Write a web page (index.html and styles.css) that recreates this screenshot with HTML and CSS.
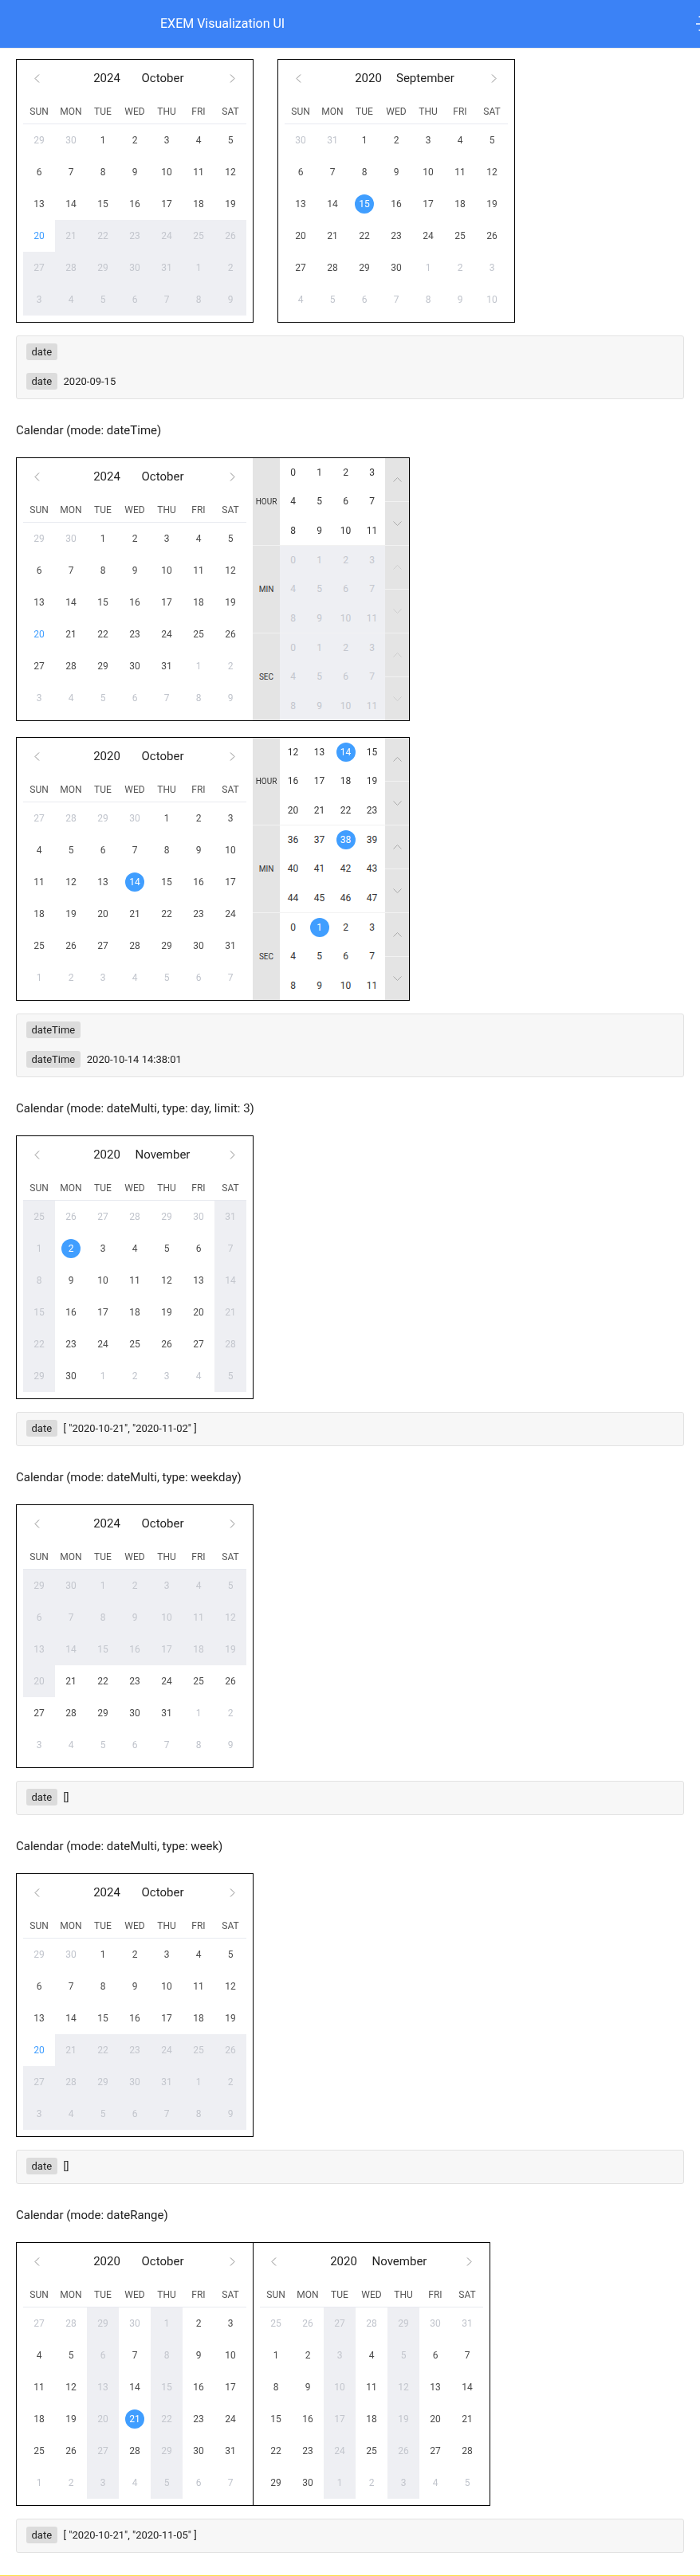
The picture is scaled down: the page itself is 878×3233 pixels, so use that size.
FILE: index.html
```html
<!DOCTYPE html>
<html lang="en">
<head>
<meta charset="utf-8">
<title>EXEM Visualization UI</title>
<link rel="stylesheet" href="styles.css">
</head>
<body>
<div class="app">
<header class="topbar">
  <span class="brand">EXEM Visualization UI</span>
  <svg class="menu" width="5" height="20" viewBox="0 0 5 20"><path d="M3.5 1H5M0 10h5M3.5 18H5" stroke="#fff" stroke-width="1.4"/></svg>
</header>

<main class="page">
  <div class="row">
    <div class="box">
      <div class="cal-body">
        <div class="cal-head"><span class="nav"><svg width="7" height="11" viewBox="0 0 7 11"><path d="M6 .5 1 5.5l5 5" fill="none" stroke="#8c8c8c"/></svg></span><div class="ym"><span>2024</span><span>October</span></div><span class="nav"><svg width="7" height="11" viewBox="0 0 7 11"><path d="M1 .5l5 5-5 5" fill="none" stroke="#8c8c8c"/></svg></span></div>
        <div class="week"><span>SUN</span><span>MON</span><span>TUE</span><span>WED</span><span>THU</span><span>FRI</span><span>SAT</span></div>
        <div class="days">
          <span class="o">29</span><span class="o">30</span><span>1</span><span>2</span><span>3</span><span>4</span><span>5</span>
          <span>6</span><span>7</span><span>8</span><span>9</span><span>10</span><span>11</span><span>12</span>
          <span>13</span><span>14</span><span>15</span><span>16</span><span>17</span><span>18</span><span>19</span>
          <span class="t">20</span><span class="x">21</span><span class="x">22</span><span class="x">23</span><span class="x">24</span><span class="x">25</span><span class="x">26</span>
          <span class="x">27</span><span class="x">28</span><span class="x">29</span><span class="x">30</span><span class="x">31</span><span class="x">1</span><span class="x">2</span>
          <span class="x">3</span><span class="x">4</span><span class="x">5</span><span class="x">6</span><span class="x">7</span><span class="x">8</span><span class="x">9</span>
        </div>
      </div>
    </div>
    <div class="box">
      <div class="cal-body">
        <div class="cal-head"><span class="nav"><svg width="7" height="11" viewBox="0 0 7 11"><path d="M6 .5 1 5.5l5 5" fill="none" stroke="#8c8c8c"/></svg></span><div class="ym"><span>2020</span><span>September</span></div><span class="nav"><svg width="7" height="11" viewBox="0 0 7 11"><path d="M1 .5l5 5-5 5" fill="none" stroke="#8c8c8c"/></svg></span></div>
        <div class="week"><span>SUN</span><span>MON</span><span>TUE</span><span>WED</span><span>THU</span><span>FRI</span><span>SAT</span></div>
        <div class="days">
          <span class="o">30</span><span class="o">31</span><span>1</span><span>2</span><span>3</span><span>4</span><span>5</span>
          <span>6</span><span>7</span><span>8</span><span>9</span><span>10</span><span>11</span><span>12</span>
          <span>13</span><span>14</span><span class="s"><i>15</i></span><span>16</span><span>17</span><span>18</span><span>19</span>
          <span>20</span><span>21</span><span>22</span><span>23</span><span>24</span><span>25</span><span>26</span>
          <span>27</span><span>28</span><span>29</span><span>30</span><span class="o">1</span><span class="o">2</span><span class="o">3</span>
          <span class="o">4</span><span class="o">5</span><span class="o">6</span><span class="o">7</span><span class="o">8</span><span class="o">9</span><span class="o">10</span>
        </div>
      </div>
    </div>
  </div>

  <div class="info">
    <div class="line"><span class="tag">date</span></div>
    <div class="line"><span class="tag">date</span><span>2020-09-15</span></div>
  </div>

  <h3 class="title">Calendar (mode: dateTime)</h3>

  <div class="box">
    <div class="cal-body">
      <div class="cal-head"><span class="nav"><svg width="7" height="11" viewBox="0 0 7 11"><path d="M6 .5 1 5.5l5 5" fill="none" stroke="#8c8c8c"/></svg></span><div class="ym"><span>2024</span><span>October</span></div><span class="nav"><svg width="7" height="11" viewBox="0 0 7 11"><path d="M1 .5l5 5-5 5" fill="none" stroke="#8c8c8c"/></svg></span></div>
      <div class="week"><span>SUN</span><span>MON</span><span>TUE</span><span>WED</span><span>THU</span><span>FRI</span><span>SAT</span></div>
      <div class="days">
        <span class="o">29</span><span class="o">30</span><span>1</span><span>2</span><span>3</span><span>4</span><span>5</span>
        <span>6</span><span>7</span><span>8</span><span>9</span><span>10</span><span>11</span><span>12</span>
        <span>13</span><span>14</span><span>15</span><span>16</span><span>17</span><span>18</span><span>19</span>
        <span class="t">20</span><span>21</span><span>22</span><span>23</span><span>24</span><span>25</span><span>26</span>
        <span>27</span><span>28</span><span>29</span><span>30</span><span>31</span><span class="o">1</span><span class="o">2</span>
        <span class="o">3</span><span class="o">4</span><span class="o">5</span><span class="o">6</span><span class="o">7</span><span class="o">8</span><span class="o">9</span>
      </div>
    </div>
    <div class="time">
      <div class="tsec">
        <span class="tlabel">HOUR</span>
        <div class="tnums"><span>0</span><span>1</span><span>2</span><span>3</span><span>4</span><span>5</span><span>6</span><span>7</span><span>8</span><span>9</span><span>10</span><span>11</span></div>
        <div class="tarrows"><span><svg width="11" height="6" viewBox="0 0 11 6"><path d="M.5 5.5l5-5 5 5" fill="none"/></svg></span><span><svg width="11" height="6" viewBox="0 0 11 6"><path d="M.5.5l5 5 5-5" fill="none"/></svg></span></div>
      </div>
      <div class="tsec off">
        <span class="tlabel">MIN</span>
        <div class="tnums"><span>0</span><span>1</span><span>2</span><span>3</span><span>4</span><span>5</span><span>6</span><span>7</span><span>8</span><span>9</span><span>10</span><span>11</span></div>
        <div class="tarrows"><span><svg width="11" height="6" viewBox="0 0 11 6"><path d="M.5 5.5l5-5 5 5" fill="none"/></svg></span><span><svg width="11" height="6" viewBox="0 0 11 6"><path d="M.5.5l5 5 5-5" fill="none"/></svg></span></div>
      </div>
      <div class="tsec off">
        <span class="tlabel">SEC</span>
        <div class="tnums"><span>0</span><span>1</span><span>2</span><span>3</span><span>4</span><span>5</span><span>6</span><span>7</span><span>8</span><span>9</span><span>10</span><span>11</span></div>
        <div class="tarrows"><span><svg width="11" height="6" viewBox="0 0 11 6"><path d="M.5 5.5l5-5 5 5" fill="none"/></svg></span><span><svg width="11" height="6" viewBox="0 0 11 6"><path d="M.5.5l5 5 5-5" fill="none"/></svg></span></div>
      </div>
    </div>
  </div>

  <div class="box gap20">
    <div class="cal-body">
      <div class="cal-head"><span class="nav"><svg width="7" height="11" viewBox="0 0 7 11"><path d="M6 .5 1 5.5l5 5" fill="none" stroke="#8c8c8c"/></svg></span><div class="ym"><span>2020</span><span>October</span></div><span class="nav"><svg width="7" height="11" viewBox="0 0 7 11"><path d="M1 .5l5 5-5 5" fill="none" stroke="#8c8c8c"/></svg></span></div>
      <div class="week"><span>SUN</span><span>MON</span><span>TUE</span><span>WED</span><span>THU</span><span>FRI</span><span>SAT</span></div>
      <div class="days">
        <span class="o">27</span><span class="o">28</span><span class="o">29</span><span class="o">30</span><span>1</span><span>2</span><span>3</span>
        <span>4</span><span>5</span><span>6</span><span>7</span><span>8</span><span>9</span><span>10</span>
        <span>11</span><span>12</span><span>13</span><span class="s"><i>14</i></span><span>15</span><span>16</span><span>17</span>
        <span>18</span><span>19</span><span>20</span><span>21</span><span>22</span><span>23</span><span>24</span>
        <span>25</span><span>26</span><span>27</span><span>28</span><span>29</span><span>30</span><span>31</span>
        <span class="o">1</span><span class="o">2</span><span class="o">3</span><span class="o">4</span><span class="o">5</span><span class="o">6</span><span class="o">7</span>
      </div>
    </div>
    <div class="time">
      <div class="tsec">
        <span class="tlabel">HOUR</span>
        <div class="tnums"><span>12</span><span>13</span><span class="s"><i>14</i></span><span>15</span><span>16</span><span>17</span><span>18</span><span>19</span><span>20</span><span>21</span><span>22</span><span>23</span></div>
        <div class="tarrows"><span><svg width="11" height="6" viewBox="0 0 11 6"><path d="M.5 5.5l5-5 5 5" fill="none"/></svg></span><span><svg width="11" height="6" viewBox="0 0 11 6"><path d="M.5.5l5 5 5-5" fill="none"/></svg></span></div>
      </div>
      <div class="tsec">
        <span class="tlabel">MIN</span>
        <div class="tnums"><span>36</span><span>37</span><span class="s"><i>38</i></span><span>39</span><span>40</span><span>41</span><span>42</span><span>43</span><span>44</span><span>45</span><span>46</span><span>47</span></div>
        <div class="tarrows"><span><svg width="11" height="6" viewBox="0 0 11 6"><path d="M.5 5.5l5-5 5 5" fill="none"/></svg></span><span><svg width="11" height="6" viewBox="0 0 11 6"><path d="M.5.5l5 5 5-5" fill="none"/></svg></span></div>
      </div>
      <div class="tsec">
        <span class="tlabel">SEC</span>
        <div class="tnums"><span>0</span><span class="s"><i>1</i></span><span>2</span><span>3</span><span>4</span><span>5</span><span>6</span><span>7</span><span>8</span><span>9</span><span>10</span><span>11</span></div>
        <div class="tarrows"><span><svg width="11" height="6" viewBox="0 0 11 6"><path d="M.5 5.5l5-5 5 5" fill="none"/></svg></span><span><svg width="11" height="6" viewBox="0 0 11 6"><path d="M.5.5l5 5 5-5" fill="none"/></svg></span></div>
      </div>
    </div>
  </div>

  <div class="info">
    <div class="line"><span class="tag">dateTime</span></div>
    <div class="line"><span class="tag">dateTime</span><span>2020-10-14 14:38:01</span></div>
  </div>

  <h3 class="title">Calendar (mode: dateMulti, type: day, limit: 3)</h3>

  <div class="box">
    <div class="cal-body">
      <div class="cal-head"><span class="nav"><svg width="7" height="11" viewBox="0 0 7 11"><path d="M6 .5 1 5.5l5 5" fill="none" stroke="#8c8c8c"/></svg></span><div class="ym"><span>2020</span><span>November</span></div><span class="nav"><svg width="7" height="11" viewBox="0 0 7 11"><path d="M1 .5l5 5-5 5" fill="none" stroke="#8c8c8c"/></svg></span></div>
      <div class="week"><span>SUN</span><span>MON</span><span>TUE</span><span>WED</span><span>THU</span><span>FRI</span><span>SAT</span></div>
      <div class="days">
        <span class="x">25</span><span class="o">26</span><span class="o">27</span><span class="o">28</span><span class="o">29</span><span class="o">30</span><span class="x">31</span>
        <span class="x">1</span><span class="s"><i>2</i></span><span>3</span><span>4</span><span>5</span><span>6</span><span class="x">7</span>
        <span class="x">8</span><span>9</span><span>10</span><span>11</span><span>12</span><span>13</span><span class="x">14</span>
        <span class="x">15</span><span>16</span><span>17</span><span>18</span><span>19</span><span>20</span><span class="x">21</span>
        <span class="x">22</span><span>23</span><span>24</span><span>25</span><span>26</span><span>27</span><span class="x">28</span>
        <span class="x">29</span><span>30</span><span class="o">1</span><span class="o">2</span><span class="o">3</span><span class="o">4</span><span class="x">5</span>
      </div>
    </div>
  </div>

  <div class="info">
    <div class="line"><span class="tag">date</span><span>[ "2020-10-21", "2020-11-02" ]</span></div>
  </div>

  <h3 class="title">Calendar (mode: dateMulti, type: weekday)</h3>

  <div class="box">
    <div class="cal-body">
      <div class="cal-head"><span class="nav"><svg width="7" height="11" viewBox="0 0 7 11"><path d="M6 .5 1 5.5l5 5" fill="none" stroke="#8c8c8c"/></svg></span><div class="ym"><span>2024</span><span>October</span></div><span class="nav"><svg width="7" height="11" viewBox="0 0 7 11"><path d="M1 .5l5 5-5 5" fill="none" stroke="#8c8c8c"/></svg></span></div>
      <div class="week"><span>SUN</span><span>MON</span><span>TUE</span><span>WED</span><span>THU</span><span>FRI</span><span>SAT</span></div>
      <div class="days">
        <span class="x">29</span><span class="x">30</span><span class="x">1</span><span class="x">2</span><span class="x">3</span><span class="x">4</span><span class="x">5</span>
        <span class="x">6</span><span class="x">7</span><span class="x">8</span><span class="x">9</span><span class="x">10</span><span class="x">11</span><span class="x">12</span>
        <span class="x">13</span><span class="x">14</span><span class="x">15</span><span class="x">16</span><span class="x">17</span><span class="x">18</span><span class="x">19</span>
        <span class="x">20</span><span>21</span><span>22</span><span>23</span><span>24</span><span>25</span><span>26</span>
        <span>27</span><span>28</span><span>29</span><span>30</span><span>31</span><span class="o">1</span><span class="o">2</span>
        <span class="o">3</span><span class="o">4</span><span class="o">5</span><span class="o">6</span><span class="o">7</span><span class="o">8</span><span class="o">9</span>
      </div>
    </div>
  </div>

  <div class="info">
    <div class="line"><span class="tag">date</span><span>[]</span></div>
  </div>

  <h3 class="title">Calendar (mode: dateMulti, type: week)</h3>

  <div class="box">
    <div class="cal-body">
      <div class="cal-head"><span class="nav"><svg width="7" height="11" viewBox="0 0 7 11"><path d="M6 .5 1 5.5l5 5" fill="none" stroke="#8c8c8c"/></svg></span><div class="ym"><span>2024</span><span>October</span></div><span class="nav"><svg width="7" height="11" viewBox="0 0 7 11"><path d="M1 .5l5 5-5 5" fill="none" stroke="#8c8c8c"/></svg></span></div>
      <div class="week"><span>SUN</span><span>MON</span><span>TUE</span><span>WED</span><span>THU</span><span>FRI</span><span>SAT</span></div>
      <div class="days">
        <span class="o">29</span><span class="o">30</span><span>1</span><span>2</span><span>3</span><span>4</span><span>5</span>
        <span>6</span><span>7</span><span>8</span><span>9</span><span>10</span><span>11</span><span>12</span>
        <span>13</span><span>14</span><span>15</span><span>16</span><span>17</span><span>18</span><span>19</span>
        <span class="t">20</span><span class="x">21</span><span class="x">22</span><span class="x">23</span><span class="x">24</span><span class="x">25</span><span class="x">26</span>
        <span class="x">27</span><span class="x">28</span><span class="x">29</span><span class="x">30</span><span class="x">31</span><span class="x">1</span><span class="x">2</span>
        <span class="x">3</span><span class="x">4</span><span class="x">5</span><span class="x">6</span><span class="x">7</span><span class="x">8</span><span class="x">9</span>
      </div>
    </div>
  </div>

  <div class="info">
    <div class="line"><span class="tag">date</span><span>[]</span></div>
  </div>

  <h3 class="title">Calendar (mode: dateRange)</h3>

  <div class="box">
    <div class="cal-body">
      <div class="cal-head"><span class="nav"><svg width="7" height="11" viewBox="0 0 7 11"><path d="M6 .5 1 5.5l5 5" fill="none" stroke="#8c8c8c"/></svg></span><div class="ym"><span>2020</span><span>October</span></div><span class="nav"><svg width="7" height="11" viewBox="0 0 7 11"><path d="M1 .5l5 5-5 5" fill="none" stroke="#8c8c8c"/></svg></span></div>
      <div class="week"><span>SUN</span><span>MON</span><span>TUE</span><span>WED</span><span>THU</span><span>FRI</span><span>SAT</span></div>
      <div class="days">
        <span class="o">27</span><span class="o">28</span><span class="x">29</span><span class="o">30</span><span class="x">1</span><span>2</span><span>3</span>
        <span>4</span><span>5</span><span class="x">6</span><span>7</span><span class="x">8</span><span>9</span><span>10</span>
        <span>11</span><span>12</span><span class="x">13</span><span>14</span><span class="x">15</span><span>16</span><span>17</span>
        <span>18</span><span>19</span><span class="x">20</span><span class="s"><i>21</i></span><span class="x">22</span><span>23</span><span>24</span>
        <span>25</span><span>26</span><span class="x">27</span><span>28</span><span class="x">29</span><span>30</span><span>31</span>
        <span class="o">1</span><span class="o">2</span><span class="x">3</span><span class="o">4</span><span class="x">5</span><span class="o">6</span><span class="o">7</span>
      </div>
    </div>
    <div class="cal-body">
      <div class="cal-head"><span class="nav"><svg width="7" height="11" viewBox="0 0 7 11"><path d="M6 .5 1 5.5l5 5" fill="none" stroke="#8c8c8c"/></svg></span><div class="ym"><span>2020</span><span>November</span></div><span class="nav"><svg width="7" height="11" viewBox="0 0 7 11"><path d="M1 .5l5 5-5 5" fill="none" stroke="#8c8c8c"/></svg></span></div>
      <div class="week"><span>SUN</span><span>MON</span><span>TUE</span><span>WED</span><span>THU</span><span>FRI</span><span>SAT</span></div>
      <div class="days">
        <span class="o">25</span><span class="o">26</span><span class="x">27</span><span class="o">28</span><span class="x">29</span><span class="o">30</span><span class="o">31</span>
        <span>1</span><span>2</span><span class="x">3</span><span>4</span><span class="x">5</span><span>6</span><span>7</span>
        <span>8</span><span>9</span><span class="x">10</span><span>11</span><span class="x">12</span><span>13</span><span>14</span>
        <span>15</span><span>16</span><span class="x">17</span><span>18</span><span class="x">19</span><span>20</span><span>21</span>
        <span>22</span><span>23</span><span class="x">24</span><span>25</span><span class="x">26</span><span>27</span><span>28</span>
        <span>29</span><span>30</span><span class="x">1</span><span class="o">2</span><span class="x">3</span><span class="o">4</span><span class="o">5</span>
      </div>
    </div>
  </div>

  <div class="info">
    <div class="line"><span class="tag">date</span><span>[ "2020-10-21", "2020-11-05" ]</span></div>
  </div>
</main>
<div class="bottom-line"></div>
</div>
</body>
</html>
```

FILE: styles.css
```css
* { box-sizing: border-box; }

html, body {
  margin: 0;
  background: #fff;
}

body {
  font-family: Roboto, "Liberation Sans", Arial, sans-serif;
  color: #222;
  overflow-x: hidden;
  -webkit-font-smoothing: antialiased;
}

/* grayscale text antialiasing, as in the reference */
.app {
  opacity: 0.999;
}

.topbar {
  height: 60px;
  background: #3b82f6;
  color: #fff;
  display: flex;
  align-items: center;
  padding-left: 201px;
  box-shadow: 0 1px 1px rgba(0, 0, 0, 0.08);
}

.brand {
  font-size: 16px;
  line-height: 20px;
}

.menu {
  margin-left: auto;
  display: block;
}

.page {
  padding: 14px 20px 0;
}

.row {
  display: flex;
  gap: 30px;
}

.box {
  display: flex;
  width: max-content;
  border: 1px solid #000;
  background: #fff;
}

.gap20 { margin-top: 20px; }

.title + .box { margin-top: 23px; }

.cal-body {
  padding: 8px;
}

.cal-body + .cal-body {
  border-left: 1px solid #000;
}

.cal-head {
  height: 30px;
  display: flex;
  align-items: center;
  width: 280px;
}

.nav {
  width: 35px;
  height: 30px;
  display: flex;
  align-items: center;
  justify-content: center;
}

.ym {
  flex: 1;
  display: flex;
  justify-content: center;
  font-size: 15px;
  color: #1f1f1f;
}

.ym span {
  width: 70px;
  text-align: center;
}

.week {
  display: grid;
  grid-template-columns: repeat(7, 40px);
  height: 43px;
  align-items: end;
  padding-bottom: 4px;
  border-bottom: 1px solid #e8eaf0;
}

.week span {
  text-align: center;
  font-size: 12px;
  line-height: 22px;
  color: #555;
}

.days {
  display: grid;
  grid-template-columns: repeat(7, 40px);
  grid-auto-rows: 40px;
}

.days span {
  display: flex;
  align-items: center;
  justify-content: center;
  font-size: 12px;
  color: #4a4a4a;
}

.days span.o { color: #c0c4cc; }
.days span.x { color: #c3c6cd; background: #eeeff3; }
.days span.t { color: #409eff; }

.s i {
  font-style: normal;
  width: 24px;
  height: 24px;
  border-radius: 50%;
  background: #409eff;
  color: #fff;
  display: flex;
  align-items: center;
  justify-content: center;
}

.time {
  width: 196px;
  display: flex;
  flex-direction: column;
}

.tsec {
  flex: 1;
  display: flex;
}

.tsec + .tsec { border-top: 1px solid #f2f2f2; }

.tlabel {
  width: 34px;
  background: #e4e4e4;
  display: flex;
  align-items: center;
  justify-content: center;
  font-size: 10px;
  color: #333;
}

.tnums {
  width: 132px;
  display: grid;
  grid-template-columns: repeat(4, 1fr);
  grid-template-rows: repeat(3, 1fr);
  background: #fff;
}

.tnums span {
  display: flex;
  align-items: center;
  justify-content: center;
  font-size: 12px;
  color: #333;
}

.tarrows {
  width: 30px;
  background: #e4e4e4;
  display: flex;
  flex-direction: column;
}

.tarrows span {
  flex: 1;
  display: flex;
  align-items: center;
  justify-content: center;
}

.tarrows span + span { border-top: 1px solid #f2f2f2; }

.tarrows path { stroke: #a8a8a8; }

.tsec.off .tnums { background: #eeeff3; }
.tsec.off .tnums span { color: #c3c6cd; }
.tsec.off .tarrows path { stroke: #cdcdcd; }

.info {
  margin-top: 16px;
  background: #f7f7f7;
  border: 1px solid #e2e2e2;
  border-radius: 3px;
  padding: 9px 12px 11px;
  display: flex;
  flex-direction: column;
  gap: 16px;
}

.line {
  display: flex;
  align-items: center;
  gap: 8px;
  height: 21px;
  font-size: 13px;
  color: #222;
}

.tag {
  background: #dcdcdc;
  border-radius: 3px;
  padding: 0 6.5px;
  line-height: 21px;
  color: #222;
}

.title {
  margin: 28px 0 0;
  font-size: 15px;
  font-weight: normal;
  line-height: 22px;
  color: #222;
}

.bottom-line {
  margin-top: 28px;
  height: 1px;
  background: #fde047;
}
```
